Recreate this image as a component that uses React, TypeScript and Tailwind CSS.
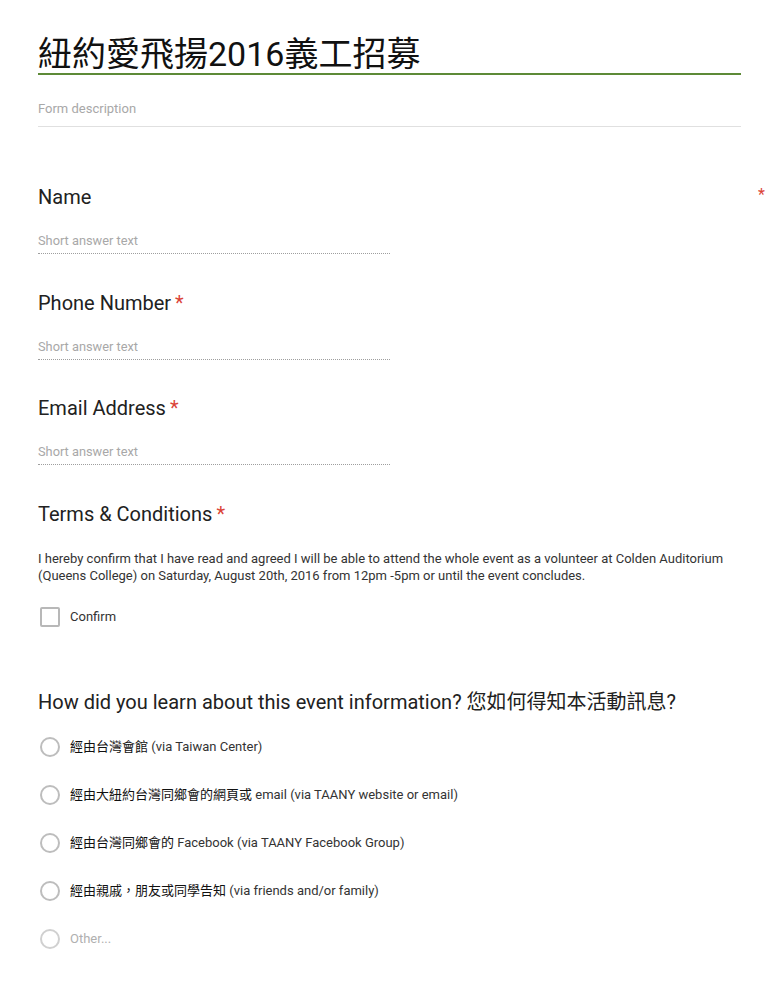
const sans = "font-['Roboto','Noto_Sans_CJK_TC',sans-serif]"

function Star() {
  return <span className="text-[#db4437] ml-[4px]">*</span>
}

function ShortAnswer({ label, required }: { label: string; required?: boolean }) {
  return (
    <div>
      <div className="text-[20px] leading-[24px] text-[#212121]">
        {label}
        {required && <Star />}
      </div>
      <div className="mt-[24px] w-[352px] border-b border-dotted border-[#9e9e9e] pb-[4px] text-[12.8px] leading-[16px] text-[#a8a8a8]">
        Short answer text
      </div>
    </div>
  )
}

const options = [
  ['經由台灣會館', '(via Taiwan Center)'],
  ['經由大紐約台灣同鄉會的網頁或', 'email (via TAANY website or email)'],
  ['經由台灣同鄉會的', 'Facebook (via TAANY Facebook Group)'],
  ['經由親戚，朋友或同學告知', '(via friends and/or family)'],
]

export default function App() {
  return (
    <div className={`relative bg-white min-h-[986px] w-[766px] pt-[35px] pl-[38px] pr-[25px] ${sans}`}>
      <span className="absolute right-[1px] top-[183px] text-[16px] text-[#db4437]">*</span>

      <h1 className="border-b-2 border-[#5d8a37] text-[34px] leading-[38px] font-normal text-[#111]">
        紐約愛飛揚2016義工招募
      </h1>
      <div className="mt-[24px] border-b border-[#e0e0e0] pb-[7px] text-[13px] leading-[20px] text-[#a8a8a8]">
        Form description
      </div>

      <div className="mt-[58px] flex flex-col gap-[36.5px]">
        <ShortAnswer label="Name" />
        <ShortAnswer label="Phone Number" required />
        <ShortAnswer label="Email Address" required />
      </div>

      <div className="mt-[36.5px]">
        <div className="text-[20px] leading-[24px] text-[#212121]">
          Terms &amp; Conditions
          <Star />
        </div>
        <p className="mt-[24px] text-[13px] leading-[17px] text-[#333]">
          I hereby confirm that I have read and agreed I will be able to attend the whole event as a volunteer at Colden Auditorium (Queens College) on Saturday, August 20th, 2016 from 12pm -5pm or until the event concludes.
        </p>
        <label className="mt-[23px] flex items-center gap-[10px]">
          <span className="ml-[2px] h-[20px] w-[20px] rounded-[2px] border-2 border-[#b8b8b8]" />
          <span className="text-[13px] text-[#333]">Confirm</span>
        </label>
      </div>

      <div className="mt-[63px]">
        <div className="text-[20px] leading-[24px] text-[#212121]">
          How did you learn about this event information? 您如何得知本活動訊息?
        </div>
        <div className="mt-[23px] flex flex-col gap-[28px]">
          {options.map(([zh, en]) => (
            <div key={zh} className="flex items-center gap-[10px]">
              <span className="ml-[2px] h-[20px] w-[20px] rounded-full border-2 border-[#bdbdbd]" />
              <span className="text-[13px] leading-[20px] text-[#333]">
                <span className="text-[#111]">{zh}</span> {en}
              </span>
            </div>
          ))}
          <div className="flex items-center gap-[10px]">
            <span className="ml-[2px] h-[20px] w-[20px] rounded-full border-2 border-[#d0d0d0]" />
            <span className="text-[13px] leading-[20px] text-[#b0b0b0]">Other...</span>
          </div>
        </div>
      </div>
    </div>
  )
}
